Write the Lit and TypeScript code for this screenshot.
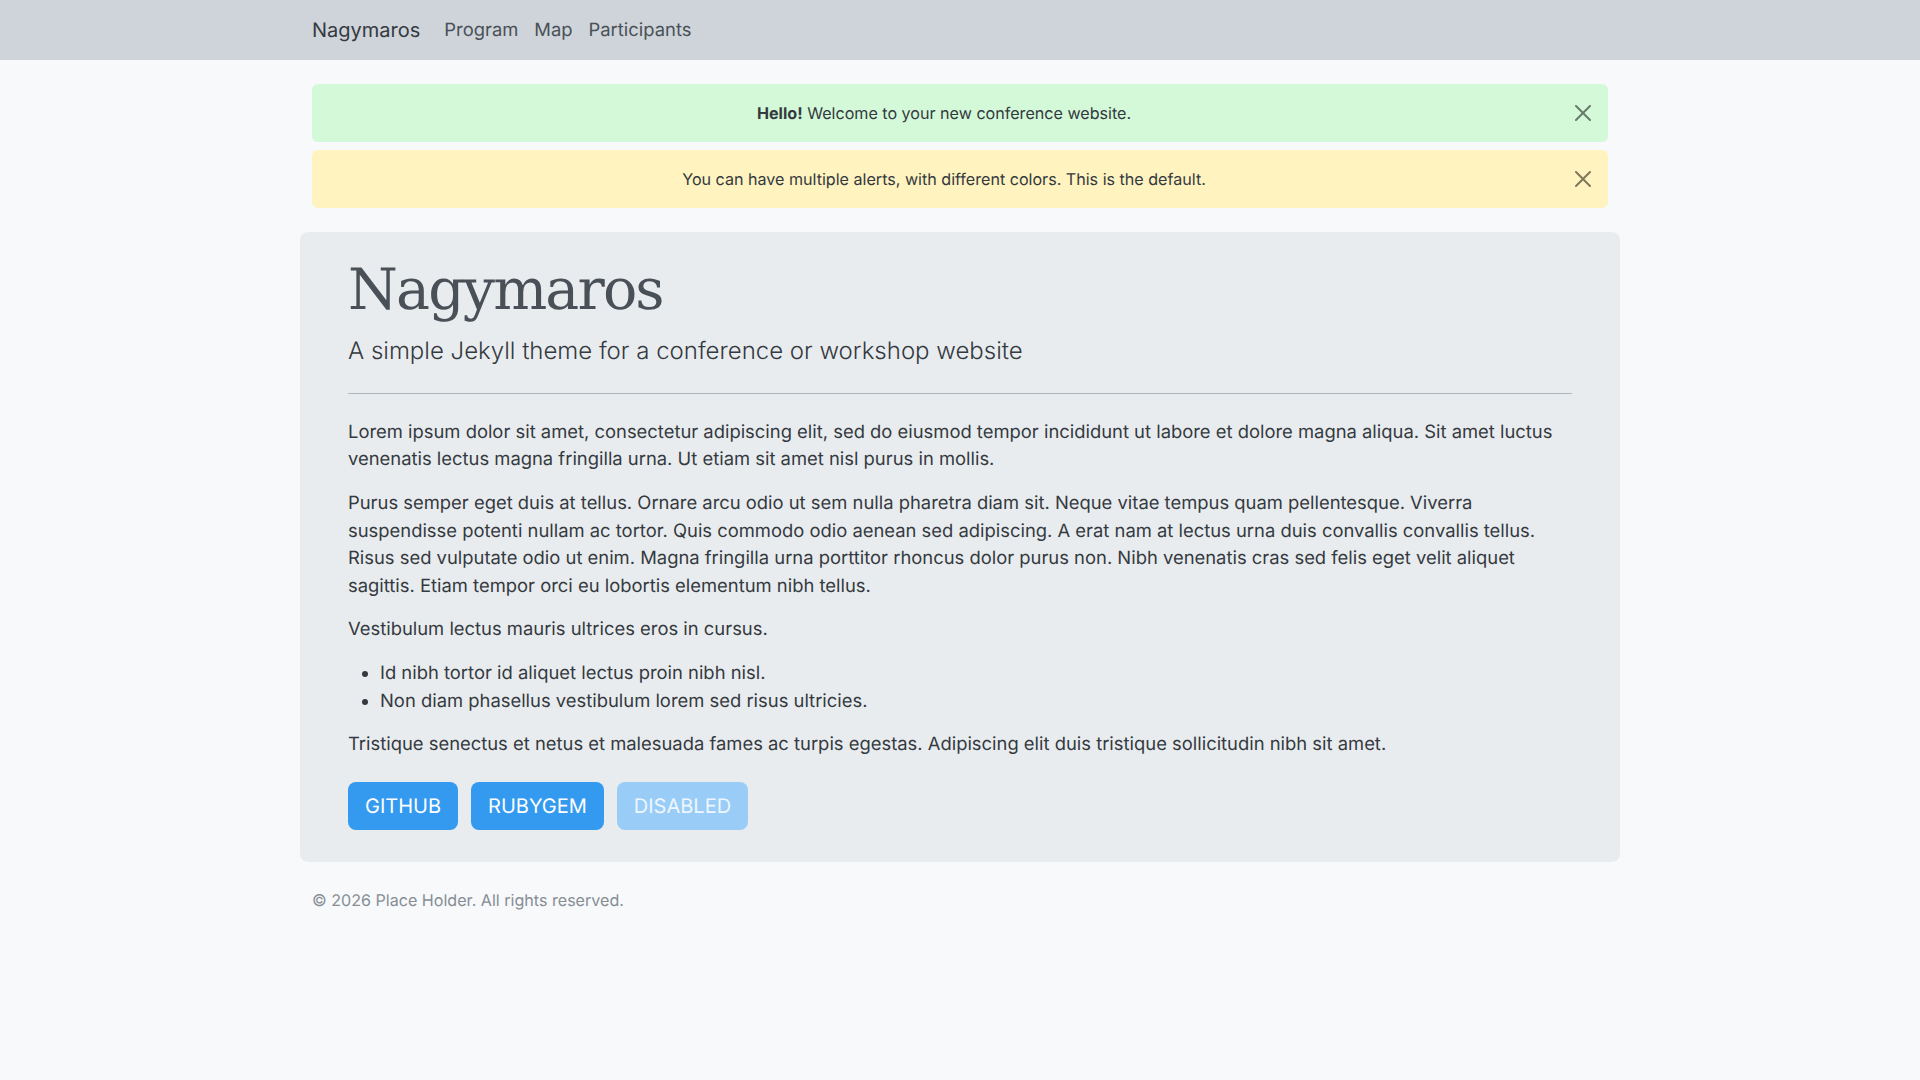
import { LitElement, html, css } from "lit";
import { customElement } from "lit/decorators.js";

const closeIcon = html`<svg viewBox="0 0 16 16" width="16" height="16" aria-hidden="true"><path fill="#000" d="M.293.293a1 1 0 0 1 1.414 0L8 6.586 14.293.293a1 1 0 1 1 1.414 1.414L9.414 8l6.293 6.293a1 1 0 0 1-1.414 1.414L8 9.414l-6.293 6.293a1 1 0 0 1-1.414-1.414L6.586 8 .293 1.707a1 1 0 0 1 0-1.414z"/></svg>`;

@customElement("app-root")
export class AppRoot extends LitElement {
  static styles = css`
    :host { display: block; min-height: 1080px; background: #f8f9fa; color: #343a40; font-family: Inter, "Liberation Sans", sans-serif; font-size: 16.1px; line-height: 24px; text-rendering: geometricPrecision; }
    * { box-sizing: border-box; }
    .nav { background: #ced4da; height: 60px; }
    .container { width: 1320px; margin: 0 auto; padding: 0 12px; }
    .nav .container { display: flex; align-items: center; height: 60px; }
    .brand { font-size: 20px; color: #343a40; margin-right: 16px; text-decoration: none; }
    .nav a.link { color: #495057; font-size: 18.4px; padding: 9px 8px 8px; line-height: 27px; text-decoration: none; }
    .alerts { padding-top: 24px; display: flex; flex-direction: column; gap: 8px; }
    .alert { position: relative; height: 58px; border-radius: 6px; padding: 17px 48px 17px 16px; text-align: center; }
    .alert.ok { background: #d3f9d8; }
    .alert.warn { background: #fff3bf; }
    .close { position: absolute; top: 0; right: 0; padding: 21px 17px; height: 58px; display: flex; opacity: .5; background: none; border: 0; }
    .jumbo { width: 1320px; margin: 24px auto 0; background: #e9ecef; border-radius: 8px; padding: 20px 48px 32px; font-size: 18.4px; line-height: 27.6px; }
    h1 { font-family: "DejaVu Serif", serif; font-weight: 400; font-size: 57px; letter-spacing: -1.85px; color: #495057; line-height: 76.8px; margin: 0 0 4px; }
    .lead { font-size: 24px; font-weight: 300; line-height: 36px; margin: 0 0 24px; }
    hr { border: 0; border-top: 1px solid #adb5bd; margin: 0 0 25px; }
    p { margin: 0 0 16px; }
    ul { margin: 0 0 16px; padding-left: 32px; }
    .btns { display: flex; gap: 13px; padding-top: 7px; }
    .btn { font-size: 20px; line-height: 30px; padding: 9px 17px; border-radius: 8px; background: #339af0; color: #fff; text-decoration: none; }
    .btn.disabled { background: #99cdf8; color: #eef6fe; }
    .footer { padding-top: 26px; color: #868e96; }
  `;

  render() {
    return html`
      <nav class="nav"><div class="container">
        <a class="brand">Nagymaros</a>
        <a class="link">Program</a><a class="link">Map</a><a class="link">Participants</a>
      </div></nav>
      <div class="container alerts">
        <div class="alert ok"><strong>Hello!</strong> Welcome to your new conference website.<button class="close">${closeIcon}</button></div>
        <div class="alert warn">You can have multiple alerts, with different colors. This is the default.<button class="close">${closeIcon}</button></div>
      </div>
      <main class="jumbo">
        <h1>Nagymaros</h1>
        <p class="lead">A simple Jekyll theme for a conference or workshop website</p>
        <hr />
        <p>Lorem ipsum dolor sit amet, consectetur adipiscing elit, sed do eiusmod tempor incididunt ut labore et dolore magna aliqua. Sit amet luctus venenatis lectus magna fringilla urna. Ut etiam sit amet nisl purus in mollis.</p>
        <p>Purus semper eget duis at tellus. Ornare arcu odio ut sem nulla pharetra diam sit. Neque vitae tempus quam pellentesque. Viverra suspendisse potenti nullam ac tortor. Quis commodo odio aenean sed adipiscing. A erat nam at lectus urna duis convallis convallis tellus. Risus sed vulputate odio ut enim. Magna fringilla urna porttitor rhoncus dolor purus non. Nibh venenatis cras sed felis eget velit aliquet sagittis. Etiam tempor orci eu lobortis elementum nibh tellus.</p>
        <p>Vestibulum lectus mauris ultrices eros in cursus.</p>
        <ul><li>Id nibh tortor id aliquet lectus proin nibh nisl.</li><li>Non diam phasellus vestibulum lorem sed risus ultricies.</li></ul>
        <p>Tristique senectus et netus et malesuada fames ac turpis egestas. Adipiscing elit duis tristique sollicitudin nibh sit amet.</p>
        <div class="btns"><a class="btn">GITHUB</a><a class="btn">RUBYGEM</a><a class="btn disabled">DISABLED</a></div>
      </main>
      <footer class="container footer">© 2026 Place Holder. All rights reserved.</footer>
    `;
  }
}
